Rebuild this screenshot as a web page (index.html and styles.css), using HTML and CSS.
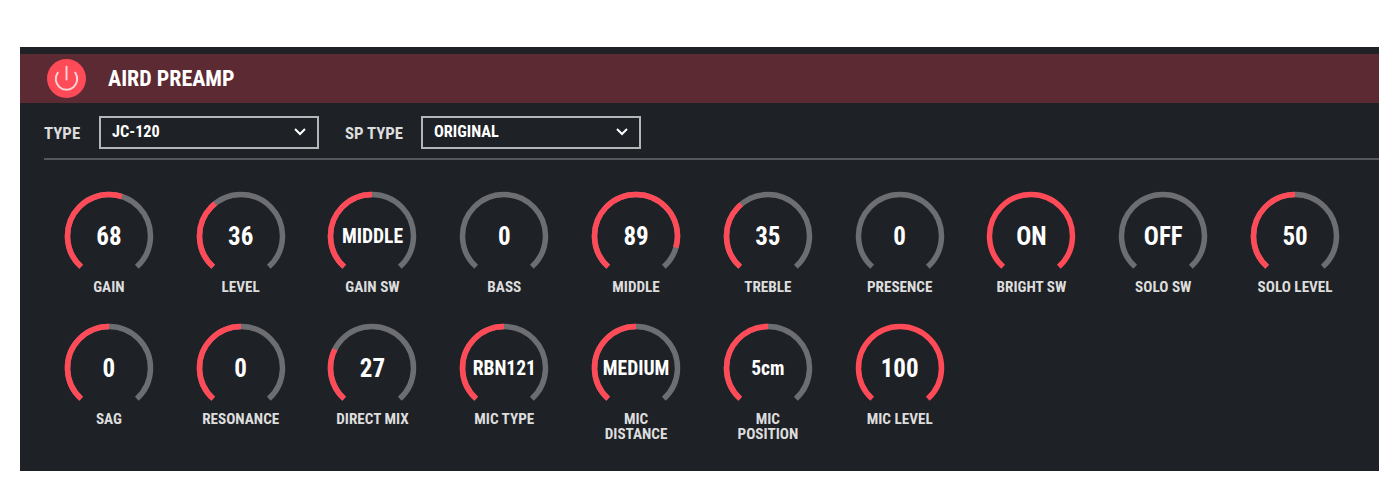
FILE: index.html
```html
<!DOCTYPE html>
<html lang="en">
<head>
    <meta charset="UTF-8">
    <title>AIRD Preamp</title>
    <link rel="stylesheet" href="styles.css">
</head>
<body>
    <div class="panel">
        <div class="head">
            <div class="power">
                <svg width="40" height="40" viewBox="0 0 40 40" fill="none" stroke="#f8d4d7" stroke-width="2" stroke-linecap="round">
                    <path d="M11.1 13.5a11 11 0 1 0 17.8 0"/>
                    <path d="M20 7.5v13"/>
                </svg>
            </div>
            <span class="head-title">AIRD PREAMP</span>
        </div>
        <div class="selects">
            <span class="sel-label">TYPE</span>
            <div class="sel">JC-120
                <svg width="12" height="8" viewBox="0 0 12 8" fill="none" stroke="#fff" stroke-width="2"><path d="M1 1l5 5 5-5"/></svg>
            </div>
            <span class="sel-label sel-label-sp">SP TYPE</span>
            <div class="sel">ORIGINAL
                <svg width="12" height="8" viewBox="0 0 12 8" fill="none" stroke="#fff" stroke-width="2"><path d="M1 1l5 5 5-5"/></svg>
            </div>
        </div>
        <div class="knobs">
            <div class="knob">
                <div class="dial">
                    <svg width="90" height="90" viewBox="0 0 90 90"><path class="track" pathLength="100" d="M17.2 75.8a41.5 41.5 0 1 1 55.6 0"/><path class="fill" pathLength="100" stroke-dasharray="56.5 100" d="M17.2 75.8a41.5 41.5 0 1 1 55.6 0"/></svg>
                    <span class="val">68</span>
                </div>
                <div class="name">GAIN</div>
            </div>
            <div class="knob">
                <div class="dial">
                    <svg width="90" height="90" viewBox="0 0 90 90"><path class="track" pathLength="100" d="M17.2 75.8a41.5 41.5 0 1 1 55.6 0"/><path class="fill" pathLength="100" stroke-dasharray="36 100" d="M17.2 75.8a41.5 41.5 0 1 1 55.6 0"/></svg>
                    <span class="val">36</span>
                </div>
                <div class="name">LEVEL</div>
            </div>
            <div class="knob">
                <div class="dial">
                    <svg width="90" height="90" viewBox="0 0 90 90"><path class="track" pathLength="100" d="M17.2 75.8a41.5 41.5 0 1 1 55.6 0"/><path class="fill" pathLength="100" stroke-dasharray="50 100" d="M17.2 75.8a41.5 41.5 0 1 1 55.6 0"/></svg>
                    <span class="val val-word">MIDDLE</span>
                </div>
                <div class="name">GAIN SW</div>
            </div>
            <div class="knob">
                <div class="dial">
                    <svg width="90" height="90" viewBox="0 0 90 90"><path class="track" pathLength="100" d="M17.2 75.8a41.5 41.5 0 1 1 55.6 0"/></svg>
                    <span class="val">0</span>
                </div>
                <div class="name">BASS</div>
            </div>
            <div class="knob">
                <div class="dial">
                    <svg width="90" height="90" viewBox="0 0 90 90"><path class="track" pathLength="100" d="M17.2 75.8a41.5 41.5 0 1 1 55.6 0"/><path class="fill" pathLength="100" stroke-dasharray="88.5 100" d="M17.2 75.8a41.5 41.5 0 1 1 55.6 0"/></svg>
                    <span class="val">89</span>
                </div>
                <div class="name">MIDDLE</div>
            </div>
            <div class="knob">
                <div class="dial">
                    <svg width="90" height="90" viewBox="0 0 90 90"><path class="track" pathLength="100" d="M17.2 75.8a41.5 41.5 0 1 1 55.6 0"/><path class="fill" pathLength="100" stroke-dasharray="35.5 100" d="M17.2 75.8a41.5 41.5 0 1 1 55.6 0"/></svg>
                    <span class="val">35</span>
                </div>
                <div class="name">TREBLE</div>
            </div>
            <div class="knob">
                <div class="dial">
                    <svg width="90" height="90" viewBox="0 0 90 90"><path class="track" pathLength="100" d="M17.2 75.8a41.5 41.5 0 1 1 55.6 0"/></svg>
                    <span class="val">0</span>
                </div>
                <div class="name">PRESENCE</div>
            </div>
            <div class="knob">
                <div class="dial">
                    <svg width="90" height="90" viewBox="0 0 90 90"><path class="fill" d="M17.2 75.8a41.5 41.5 0 1 1 55.6 0"/></svg>
                    <span class="val">ON</span>
                </div>
                <div class="name">BRIGHT SW</div>
            </div>
            <div class="knob">
                <div class="dial">
                    <svg width="90" height="90" viewBox="0 0 90 90"><path class="track" pathLength="100" d="M17.2 75.8a41.5 41.5 0 1 1 55.6 0"/></svg>
                    <span class="val">OFF</span>
                </div>
                <div class="name">SOLO SW</div>
            </div>
            <div class="knob">
                <div class="dial">
                    <svg width="90" height="90" viewBox="0 0 90 90"><path class="track" pathLength="100" d="M17.2 75.8a41.5 41.5 0 1 1 55.6 0"/><path class="fill" pathLength="100" stroke-dasharray="50 100" d="M17.2 75.8a41.5 41.5 0 1 1 55.6 0"/></svg>
                    <span class="val">50</span>
                </div>
                <div class="name">SOLO LEVEL</div>
            </div>
            <div class="knob">
                <div class="dial">
                    <svg width="90" height="90" viewBox="0 0 90 90"><path class="track" pathLength="100" d="M17.2 75.8a41.5 41.5 0 1 1 55.6 0"/><path class="fill" pathLength="100" stroke-dasharray="50 100" d="M17.2 75.8a41.5 41.5 0 1 1 55.6 0"/></svg>
                    <span class="val">0</span>
                </div>
                <div class="name">SAG</div>
            </div>
            <div class="knob">
                <div class="dial">
                    <svg width="90" height="90" viewBox="0 0 90 90"><path class="track" pathLength="100" d="M17.2 75.8a41.5 41.5 0 1 1 55.6 0"/><path class="fill" pathLength="100" stroke-dasharray="50 100" d="M17.2 75.8a41.5 41.5 0 1 1 55.6 0"/></svg>
                    <span class="val">0</span>
                </div>
                <div class="name">RESONANCE</div>
            </div>
            <div class="knob">
                <div class="dial">
                    <svg width="90" height="90" viewBox="0 0 90 90"><path class="track" pathLength="100" d="M17.2 75.8a41.5 41.5 0 1 1 55.6 0"/><path class="fill" pathLength="100" stroke-dasharray="27 100" d="M17.2 75.8a41.5 41.5 0 1 1 55.6 0"/></svg>
                    <span class="val">27</span>
                </div>
                <div class="name">DIRECT MIX</div>
            </div>
            <div class="knob">
                <div class="dial">
                    <svg width="90" height="90" viewBox="0 0 90 90"><path class="track" pathLength="100" d="M17.2 75.8a41.5 41.5 0 1 1 55.6 0"/><path class="fill" pathLength="100" stroke-dasharray="50 100" d="M17.2 75.8a41.5 41.5 0 1 1 55.6 0"/></svg>
                    <span class="val val-word">RBN121</span>
                </div>
                <div class="name">MIC TYPE</div>
            </div>
            <div class="knob">
                <div class="dial">
                    <svg width="90" height="90" viewBox="0 0 90 90"><path class="track" pathLength="100" d="M17.2 75.8a41.5 41.5 0 1 1 55.6 0"/><path class="fill" pathLength="100" stroke-dasharray="50 100" d="M17.2 75.8a41.5 41.5 0 1 1 55.6 0"/></svg>
                    <span class="val val-word">MEDIUM</span>
                </div>
                <div class="name">MIC<br>DISTANCE</div>
            </div>
            <div class="knob">
                <div class="dial">
                    <svg width="90" height="90" viewBox="0 0 90 90"><path class="track" pathLength="100" d="M17.2 75.8a41.5 41.5 0 1 1 55.6 0"/><path class="fill" pathLength="100" stroke-dasharray="50 100" d="M17.2 75.8a41.5 41.5 0 1 1 55.6 0"/></svg>
                    <span class="val val-word">5cm</span>
                </div>
                <div class="name">MIC<br>POSITION</div>
            </div>
            <div class="knob">
                <div class="dial">
                    <svg width="90" height="90" viewBox="0 0 90 90"><path class="fill" d="M17.2 75.8a41.5 41.5 0 1 1 55.6 0"/></svg>
                    <span class="val">100</span>
                </div>
                <div class="name">MIC LEVEL</div>
            </div>
        </div>
    </div>
</body>
</html>
```
FILE: styles.css
```css
body {
    margin: 0;
    padding: 47px 0 0 20px;
    background: #fff;
    font-family: "Roboto", sans-serif;
    font-stretch: 75%;
    font-weight: 700;
}
.panel {
    width: 1359px;
    height: 424px;
    padding-top: 7px;
    box-sizing: border-box;
    background: #1e2126;
}
.head {
    display: flex;
    align-items: center;
    height: 49px;
    padding-left: 27px;
    background: #5c2a32;
}
.power {
    width: 39px;
    height: 39px;
    border-radius: 50%;
    background: #ff4a58;
    display: flex;
    align-items: center;
    justify-content: center;
}
.head-title {
    margin-left: 22px;
    font-size: 22px;
    color: #fff;
}
.selects {
    display: flex;
    align-items: center;
    margin: 13px 0 0 24px;
    padding-bottom: 9px;
    border-bottom: 2px solid #55575a;
}
.sel-label {
    width: 55px;
    font-size: 16.8px;
    line-height: 30px;
    color: #ddd;
}
.sel-label-sp {
    width: 76px;
    margin-left: 26px;
}
.sel {
    width: 220px;
    height: 33px;
    box-sizing: border-box;
    border: 2px solid #b4b6b8;
    padding: 0 11px 2px 11px;
    display: flex;
    align-items: center;
    justify-content: space-between;
    font-size: 16.3px;
    color: #fff;
}
.knobs {
    display: grid;
    grid-template-columns: repeat(10, 131.8px);
    grid-auto-rows: 132px;
    margin: 31px 0 0 23px;
}
.knob {
    display: flex;
    flex-direction: column;
    align-items: center;
}
.dial {
    position: relative;
    width: 90px;
    height: 90px;
}
.dial svg {
    display: block;
    fill: none;
    stroke-width: 5.5;
}
.track {
    stroke: #6d6e72;
}
.fill {
    stroke: #ff4a58;
}
.val {
    position: absolute;
    inset: 0;
    display: flex;
    align-items: center;
    justify-content: center;
    font-size: 25px;
    color: #fff;
}
.val-word {
    font-size: 19.5px;
}
.name {
    margin-top: -1px;
    font-size: 15.2px;
    line-height: 15px;
    text-align: center;
    color: #ddd;
}
```
